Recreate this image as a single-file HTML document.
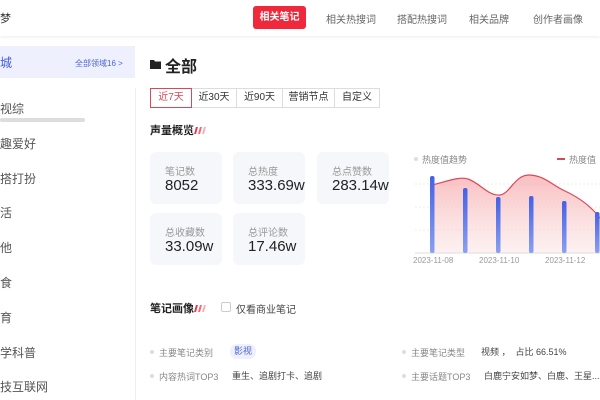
<!DOCTYPE html>
<html><head><meta charset="utf-8"><style>
*{margin:0;padding:0;box-sizing:border-box}
body{width:600px;height:400px;overflow:hidden;background:#fff;font-family:"Liberation Sans","Noto Sans CJK SC",sans-serif;color:#333;position:relative}
.a{position:absolute;white-space:nowrap}
.hdr{position:absolute;left:0;top:0;width:600px;height:36px;background:#fff;box-shadow:0 1px 3px rgba(0,0,0,.08)}
.tab{font-size:10px;color:#666;top:11px}
.side{font-size:12px;color:#555}
.btn{position:absolute;top:88px;height:20px;border:1px solid #ddd;font-size:10px;line-height:18px;text-align:center;color:#333}
.card{position:absolute;width:72px;height:52px;background:#f5f7fa;border-radius:6px}
.card .l{position:absolute;left:15px;top:11px;font-size:10px;color:#999}
.card .n{position:absolute;left:15px;top:25px;font-size:15px;color:#222}
.g{font-size:9px;color:#888}
.dot{position:absolute;width:4px;height:4px;border-radius:2px;background:#ddd}
.sl{position:absolute;width:2px;height:7px;transform:skewX(-15deg)}
</style></head><body>
<div class="hdr"></div>
<div class="a" style="left:0;top:10px;font-size:11px;color:#333">梦</div>
<div class="a" style="left:253px;top:6px;width:53px;height:23px;background:#f0283c;border-radius:3px;color:#fff;font-size:10px;font-weight:bold;line-height:23px;text-align:center">相关笔记</div>
<div class="a tab" style="left:326px">相关热搜词</div>
<div class="a tab" style="left:397px">搭配热搜词</div>
<div class="a tab" style="left:469px">相关品牌</div>
<div class="a tab" style="left:533px">创作者画像</div>

<div class="a" style="left:0;top:46px;width:135px;height:32px;background:#eef1fd"></div>
<div class="a" style="left:0;top:54px;font-size:12px;color:#3e5bd8">城</div>
<div class="a" style="left:75px;top:58px;font-size:8px;color:#4a63d8">全部领域16 &gt;</div>
<div class="a" style="left:135px;top:88px;width:1px;height:312px;background:#eee"></div>
<div class="a side" style="left:0;top:100px">视综</div>
<div class="a" style="left:0;top:118px;width:85px;height:4px;border-radius:2px;background:#ddd"></div>
<div class="a side" style="left:0;top:135px">趣爱好</div>
<div class="a side" style="left:0;top:170px">搭打扮</div>
<div class="a side" style="left:0;top:204px">活</div>
<div class="a side" style="left:0;top:239px">他</div>
<div class="a side" style="left:0;top:274px">食</div>
<div class="a side" style="left:0;top:309px">育</div>
<div class="a side" style="left:0;top:344px">学科普</div>
<div class="a side" style="left:0;top:378px">技互联网</div>

<svg class="a" style="left:150px;top:59px" width="12" height="10" viewBox="0 0 12 10"><path d="M0 1h4l1 1.5h6V10H0z" fill="#222"/></svg>
<div class="a" style="left:165px;top:53px;font-size:16px;font-weight:bold;color:#222">全部</div>

<div class="btn" style="left:150px;width:42px;border-color:#d9485a;color:#d9485a;z-index:2">近7天</div>
<div class="btn" style="left:191px;width:46px">近30天</div>
<div class="btn" style="left:236px;width:47px">近90天</div>
<div class="btn" style="left:282px;width:53px">营销节点</div>
<div class="btn" style="left:334px;width:46px">自定义</div>

<div class="a" style="left:150px;top:122px;font-size:11px;font-weight:bold;color:#222">声量概览</div>
<div class="sl" style="left:195px;top:127px;background:#e6394e"></div>
<div class="sl" style="left:199px;top:127px;background:#ec6a7a"></div>
<div class="sl" style="left:203px;top:127px;background:#f5b0b8"></div>

<div class="card" style="left:150px;top:152px"><div class="l">笔记数</div><div class="n">8052</div></div>
<div class="card" style="left:233px;top:152px"><div class="l">总热度</div><div class="n">333.69w</div></div>
<div class="card" style="left:317px;top:152px"><div class="l">总点赞数</div><div class="n">283.14w</div></div>
<div class="card" style="left:150px;top:213px"><div class="l">总收藏数</div><div class="n">33.09w</div></div>
<div class="card" style="left:233px;top:213px"><div class="l">总评论数</div><div class="n">17.46w</div></div>

<div class="dot" style="left:414px;top:157px"></div>
<div class="a g" style="left:422px;top:153px">热度值趋势</div>
<div class="a" style="left:557px;top:158px;width:8px;height:2px;background:#d9485a"></div>
<div class="a g" style="left:569px;top:153px">热度值</div>
<svg class="a" style="left:400px;top:165px" width="200" height="95" viewBox="400 165 200 95">
<defs><linearGradient id="f" x1="0" y1="0" x2="0" y2="1"><stop offset="0" stop-color="#f6a3a6" stop-opacity=".7"/><stop offset="1" stop-color="#fbe3e3" stop-opacity=".5"/></linearGradient>
<linearGradient id="b" x1="0" y1="0" x2="0" y2="1"><stop offset="0" stop-color="#4460e6"/><stop offset="1" stop-color="#8aa0f0"/></linearGradient></defs>
<g stroke="#eee" stroke-dasharray="2 2"><line x1="415" y1="184" x2="600" y2="184"/><line x1="415" y1="207" x2="600" y2="207"/><line x1="415" y1="230" x2="600" y2="230"/></g>
<path d="M432 185 C445 182 460 176 468 179 C480 183 488 196 500 195 C510 194 515 174 530 175 C545 176 552 185 565 191 C578 197 590 205 600 218 L600 253 L432 253Z" fill="url(#f)"/>
<path d="M432 185 C445 182 460 176 468 179 C480 183 488 196 500 195 C510 194 515 174 530 175 C545 176 552 185 565 191 C578 197 590 205 600 218" fill="none" stroke="#d9485a" stroke-width="1.2"/>
<line x1="415" y1="253" x2="600" y2="253" stroke="#ddd"/>
<g fill="url(#b)"><rect x="430" y="176" width="4.5" height="77" rx="2"/><rect x="463" y="188" width="4.5" height="65" rx="2"/><rect x="496" y="197" width="4.5" height="56" rx="2"/><rect x="529" y="196" width="4.5" height="57" rx="2"/><rect x="562" y="201" width="4.5" height="52" rx="2"/><rect x="595" y="212" width="4.5" height="41" rx="2"/></g>
</svg>
<div class="a" style="left:413px;top:256px;font-size:8px;color:#999">2023-11-08</div>
<div class="a" style="left:479px;top:256px;font-size:8px;color:#999">2023-11-10</div>
<div class="a" style="left:545px;top:256px;font-size:8px;color:#999">2023-11-12</div>

<div class="a" style="left:150px;top:300px;font-size:11px;font-weight:bold;color:#222">笔记画像</div>
<div class="sl" style="left:195px;top:305px;background:#e6394e"></div>
<div class="sl" style="left:199px;top:305px;background:#ec6a7a"></div>
<div class="sl" style="left:203px;top:305px;background:#f5b0b8"></div>
<div class="a" style="left:221px;top:302px;width:10px;height:10px;border:1px solid #ccc;border-radius:2px"></div>
<div class="a" style="left:236px;top:301px;font-size:10px;color:#444">仅看商业笔记</div>

<div class="dot" style="left:150px;top:350px"></div>
<div class="a g" style="left:159px;top:346px">主要笔记类别</div>
<div class="a" style="left:230px;top:344px;width:26px;height:15px;border-radius:7px;background:#eef0fd;color:#4a63d8;font-size:9px;line-height:15px;text-align:center">影视</div>
<div class="dot" style="left:150px;top:374px"></div>
<div class="a g" style="left:159px;top:370px">内容热词TOP3</div>
<div class="a" style="left:232px;top:369px;font-size:9px;color:#444">重生、追剧打卡、追剧</div>
<div class="dot" style="left:402px;top:350px"></div>
<div class="a g" style="left:411px;top:346px">主要笔记类型</div>
<div class="a" style="left:481px;top:345px;font-size:9px;color:#444">视频 ，&nbsp;&nbsp;占比 66.51%</div>
<div class="dot" style="left:402px;top:374px"></div>
<div class="a g" style="left:411px;top:370px">主要话题TOP3</div>
<div class="a" style="left:484px;top:369px;font-size:9px;color:#444">白鹿宁安如梦、白鹿、王星...</div>
</body></html>
